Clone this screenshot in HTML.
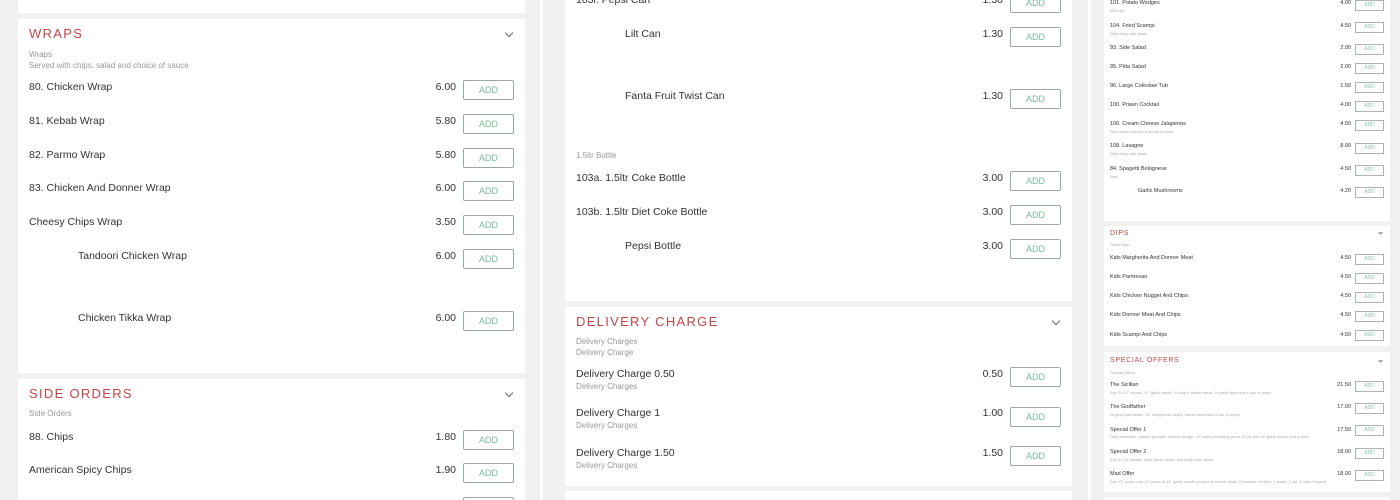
<!DOCTYPE html>
<html><head><meta charset="utf-8"><style>
*{margin:0;padding:0;box-sizing:border-box}
html{width:1400px;height:500px;overflow:hidden}
body{width:1400px;height:500px;overflow:hidden;background:#f1f1f1;position:relative;font-family:"Liberation Sans",sans-serif;color:#333}
.c{position:absolute;background:#fff}
.t{position:absolute;white-space:nowrap;line-height:1}
.n{font-size:10.5px;color:#333}
.s{font-size:8px;color:#999}
.h{font-size:13px;color:#c0464a;letter-spacing:1.3px}
.p{font-size:10.5px;color:#333;text-align:right;width:40px}
.b{position:absolute;width:51px;height:20px;border:1px solid #9aa8a2;border-radius:2px;color:#7bbb98;font-size:9px;text-align:center;line-height:18px;background:#fff}
.chev{position:absolute;width:6px;height:6px;border-right:1px solid #666;border-bottom:1px solid #666;transform:rotate(45deg)}
.rn{font-size:5.5px;color:#333}
.rs{font-size:4px;color:#aaa}
.rp{font-size:5.5px;color:#333;text-align:right;width:30px}
.rb{position:absolute;width:29px;height:11px;border:1px solid #aab5b0;color:#8bc4a4;font-size:5px;text-align:center;line-height:9px;background:#fff}
.rh{font-size:7px;color:#c0464a;letter-spacing:.7px}
.rchev{position:absolute;width:3px;height:3px;border-right:1px solid #777;border-bottom:1px solid #777;transform:rotate(45deg)}
.wrap{position:absolute;left:0;top:0;width:1400px;height:500px;overflow:hidden}
</style></head><body><div class="wrap">
<div class="c" style="left:540px;top:0;width:3px;height:500px"></div>
<div class="c" style="left:1088px;top:0;width:3px;height:500px"></div>

<!-- LEFT -->
<div class="c" style="left:18px;top:0;width:507px;height:13px"></div>
<div class="c" style="left:18px;top:19px;width:507px;height:354px"></div>
<div class="c" style="left:18px;top:379px;width:507px;height:130px"></div>
<div class="t h" style="left:29px;top:27px">WRAPS</div><div class="chev" style="left:506px;top:30px"></div>
<div class="t s" style="left:29px;top:51px">Wraps</div>
<div class="t s" style="left:29px;top:62px">Served with chips, salad and choice of sauce</div>
<div class="t n" style="left:29px;top:82px">80. Chicken Wrap</div><div class="t p" style="left:416px;top:82px">6.00</div><div class="b" style="left:463px;top:80px">ADD</div>
<div class="t n" style="left:29px;top:116px">81. Kebab Wrap</div><div class="t p" style="left:416px;top:116px">5.80</div><div class="b" style="left:463px;top:114px">ADD</div>
<div class="t n" style="left:29px;top:150px">82. Parmo Wrap</div><div class="t p" style="left:416px;top:150px">5.80</div><div class="b" style="left:463px;top:148px">ADD</div>
<div class="t n" style="left:29px;top:183px">83. Chicken And Donner Wrap</div><div class="t p" style="left:416px;top:183px">6.00</div><div class="b" style="left:463px;top:181px">ADD</div>
<div class="t n" style="left:29px;top:217px">Cheesy Chips Wrap</div><div class="t p" style="left:416px;top:217px">3.50</div><div class="b" style="left:463px;top:215px">ADD</div>
<div class="t n" style="left:78px;top:251px">Tandoori Chicken Wrap</div><div class="t p" style="left:416px;top:251px">6.00</div><div class="b" style="left:463px;top:249px">ADD</div>
<div class="t n" style="left:78px;top:313px">Chicken Tikka Wrap</div><div class="t p" style="left:416px;top:313px">6.00</div><div class="b" style="left:463px;top:311px">ADD</div>
<div class="t h" style="left:29px;top:387px">SIDE ORDERS</div><div class="chev" style="left:506px;top:390px"></div>
<div class="t s" style="left:29px;top:410px">Side Orders</div>
<div class="t n" style="left:29px;top:432px">88. Chips</div><div class="t p" style="left:416px;top:432px">1.80</div><div class="b" style="left:463px;top:430px">ADD</div>
<div class="t n" style="left:29px;top:465px">American Spicy Chips</div><div class="t p" style="left:416px;top:465px">1.90</div><div class="b" style="left:463px;top:463px">ADD</div>
<div class="b" style="left:463px;top:497px">ADD</div>

<!-- MIDDLE -->
<div class="c" style="left:565px;top:0;width:507px;height:301px"></div>
<div class="c" style="left:565px;top:307px;width:507px;height:179px"></div>
<div class="c" style="left:565px;top:491px;width:507px;height:20px"></div>
<div class="t n" style="left:576px;top:-5px">103i. Pepsi Can</div><div class="t p" style="left:963px;top:-5px">1.30</div><div class="b" style="left:1010px;top:-7px">ADD</div>
<div class="t n" style="left:625px;top:29px">Lilt Can</div><div class="t p" style="left:963px;top:29px">1.30</div><div class="b" style="left:1010px;top:27px">ADD</div>
<div class="t n" style="left:625px;top:91px">Fanta Fruit Twist Can</div><div class="t p" style="left:963px;top:91px">1.30</div><div class="b" style="left:1010px;top:89px">ADD</div>
<div class="t s" style="left:576px;top:152px">1.5ltr Bottle</div>
<div class="t n" style="left:576px;top:173px">103a. 1.5ltr Coke Bottle</div><div class="t p" style="left:963px;top:173px">3.00</div><div class="b" style="left:1010px;top:171px">ADD</div>
<div class="t n" style="left:576px;top:207px">103b. 1.5ltr Diet Coke Bottle</div><div class="t p" style="left:963px;top:207px">3.00</div><div class="b" style="left:1010px;top:205px">ADD</div>
<div class="t n" style="left:625px;top:241px">Pepsi Bottle</div><div class="t p" style="left:963px;top:241px">3.00</div><div class="b" style="left:1010px;top:239px">ADD</div>
<div class="t h" style="left:576px;top:315px">DELIVERY CHARGE</div><div class="chev" style="left:1053px;top:318px"></div>
<div class="t s" style="left:576px;top:338px">Delivery Charges</div>
<div class="t s" style="left:576px;top:349px">Delivery Charge</div>
<div class="t n" style="left:576px;top:369px">Delivery Charge 0.50</div><div class="t s" style="left:576px;top:383px">Delivery Charges</div><div class="t p" style="left:963px;top:369px">0.50</div><div class="b" style="left:1010px;top:367px">ADD</div>
<div class="t n" style="left:576px;top:408px">Delivery Charge 1</div><div class="t s" style="left:576px;top:422px">Delivery Charges</div><div class="t p" style="left:963px;top:408px">1.00</div><div class="b" style="left:1010px;top:407px">ADD</div>
<div class="t n" style="left:576px;top:448px">Delivery Charge 1.50</div><div class="t s" style="left:576px;top:462px">Delivery Charges</div><div class="t p" style="left:963px;top:448px">1.50</div><div class="b" style="left:1010px;top:446px">ADD</div>

<!-- RIGHT -->
<div class="c" style="left:1104px;top:0;width:286px;height:221px"></div>
<div class="c" style="left:1104px;top:226px;width:286px;height:120px"></div>
<div class="c" style="left:1104px;top:352px;width:286px;height:140px"></div>
<div class="c" style="left:1104px;top:497px;width:286px;height:10px"></div>

<div class="t rn" style="left:1110px;top:1px">101. Potato Wedges</div><div class="t rs" style="left:1110px;top:9px">With dip</div><div class="t rp" style="left:1321px;top:1px">4.00</div><div class="rb" style="left:1355px;top:0px">ADD</div>
<div class="t rn" style="left:1110px;top:24px">104. Fried Scampi</div><div class="t rs" style="left:1110px;top:32px">With chips and salad</div><div class="t rp" style="left:1321px;top:24px">4.50</div><div class="rb" style="left:1355px;top:22px">ADD</div>
<div class="t rn" style="left:1110px;top:46px">93. Side Salad</div><div class="t rp" style="left:1321px;top:46px">2.00</div><div class="rb" style="left:1355px;top:44px">ADD</div>
<div class="t rn" style="left:1110px;top:65px">95. Pitta Salad</div><div class="t rp" style="left:1321px;top:65px">2.00</div><div class="rb" style="left:1355px;top:63px">ADD</div>
<div class="t rn" style="left:1110px;top:84px">96. Large Coleslaw Tub</div><div class="t rp" style="left:1321px;top:84px">1.50</div><div class="rb" style="left:1355px;top:82px">ADD</div>
<div class="t rn" style="left:1110px;top:103px">100. Prawn Cocktail</div><div class="t rp" style="left:1321px;top:103px">4.00</div><div class="rb" style="left:1355px;top:101px">ADD</div>
<div class="t rn" style="left:1110px;top:122px">106. Cream Cheese Jalapenos</div><div class="t rs" style="left:1110px;top:130px">Red cream cheese in bread crumbs</div><div class="t rp" style="left:1321px;top:122px">4.50</div><div class="rb" style="left:1355px;top:120px">ADD</div>
<div class="t rn" style="left:1110px;top:144px">108. Lasagne</div><div class="t rs" style="left:1110px;top:152px">With chips and salad</div><div class="t rp" style="left:1321px;top:144px">8.00</div><div class="rb" style="left:1355px;top:143px">ADD</div>
<div class="t rn" style="left:1110px;top:167px">84. Spagetti Bolognese</div><div class="t rs" style="left:1110px;top:175px">New</div><div class="t rp" style="left:1321px;top:167px">4.50</div><div class="rb" style="left:1355px;top:165px">ADD</div>
<div class="t rn" style="left:1138px;top:189px">Garlic Mushrooms</div><div class="t rp" style="left:1321px;top:189px">4.20</div><div class="rb" style="left:1355px;top:187px">ADD</div>

<div class="t rh" style="left:1110px;top:230px">DIPS</div><div class="rchev" style="left:1379px;top:231px"></div>
<div class="t rs" style="left:1110px;top:243px">Small Dips</div>
<div class="t rn" style="left:1110px;top:256px">Kids Margherita And Donner Meat</div><div class="t rp" style="left:1321px;top:256px">4.50</div><div class="rb" style="left:1355px;top:254px">ADD</div>
<div class="t rn" style="left:1110px;top:275px">Kids Parmesan</div><div class="t rp" style="left:1321px;top:275px">4.50</div><div class="rb" style="left:1355px;top:273px">ADD</div>
<div class="t rn" style="left:1110px;top:294px">Kids Chicken Nugget And Chips</div><div class="t rp" style="left:1321px;top:294px">4.50</div><div class="rb" style="left:1355px;top:292px">ADD</div>
<div class="t rn" style="left:1110px;top:313px">Kids Donner Meat And Chips</div><div class="t rp" style="left:1321px;top:313px">4.50</div><div class="rb" style="left:1355px;top:311px">ADD</div>
<div class="t rn" style="left:1110px;top:333px">Kids Scampi And Chips</div><div class="t rp" style="left:1321px;top:333px">4.50</div><div class="rb" style="left:1355px;top:330px">ADD</div>

<div class="t rh" style="left:1110px;top:357px">SPECIAL OFFERS</div><div class="rchev" style="left:1379px;top:359px"></div>
<div class="t rs" style="left:1110px;top:371px">Special Offers</div>
<div class="t rn" style="left:1110px;top:383px">The Sicilian</div><div class="t rs" style="left:1110px;top:391px">Any 2x 12" pizzas, 10" garlic bread, 2x chips, kebab meat, 2x garlic dips and a can of pepsi</div><div class="t rp" style="left:1321px;top:383px">21.50</div><div class="rb" style="left:1355px;top:381px">ADD</div>
<div class="t rn" style="left:1110px;top:405px">The Godfather</div><div class="t rs" style="left:1110px;top:413px">Original parmesan, 10" margherita, chips, kebab meat and a can of pepsi</div><div class="t rp" style="left:1321px;top:405px">17.00</div><div class="rb" style="left:1355px;top:403px">ADD</div>
<div class="t rn" style="left:1110px;top:428px">Special Offer 1</div><div class="t rs" style="left:1110px;top:435px">Half parmesan, quarter pounder cheese burger, 10" pizza excluding pizza 10,15 and 16, garlic sauce and a drink</div><div class="t rp" style="left:1321px;top:428px">17.50</div><div class="rb" style="left:1355px;top:425px">ADD</div>
<div class="t rn" style="left:1110px;top:450px">Special Offer 2</div><div class="t rs" style="left:1110px;top:458px">Any 2x 10" pizzas, large garlic sauce and large chilli sauce</div><div class="t rp" style="left:1321px;top:450px">18.00</div><div class="rb" style="left:1355px;top:448px">ADD</div>
<div class="t rn" style="left:1110px;top:472px">Mad Offer</div><div class="t rs" style="left:1110px;top:480px">Any 12" pizza, any 10" pizza or 12" garlic bread, portion of donner meat, 2 portions of chips, 1 salad, 1 dip, 2 cans of pepsi</div><div class="t rp" style="left:1321px;top:472px">18.00</div><div class="rb" style="left:1355px;top:470px">ADD</div>
</div></body></html>
